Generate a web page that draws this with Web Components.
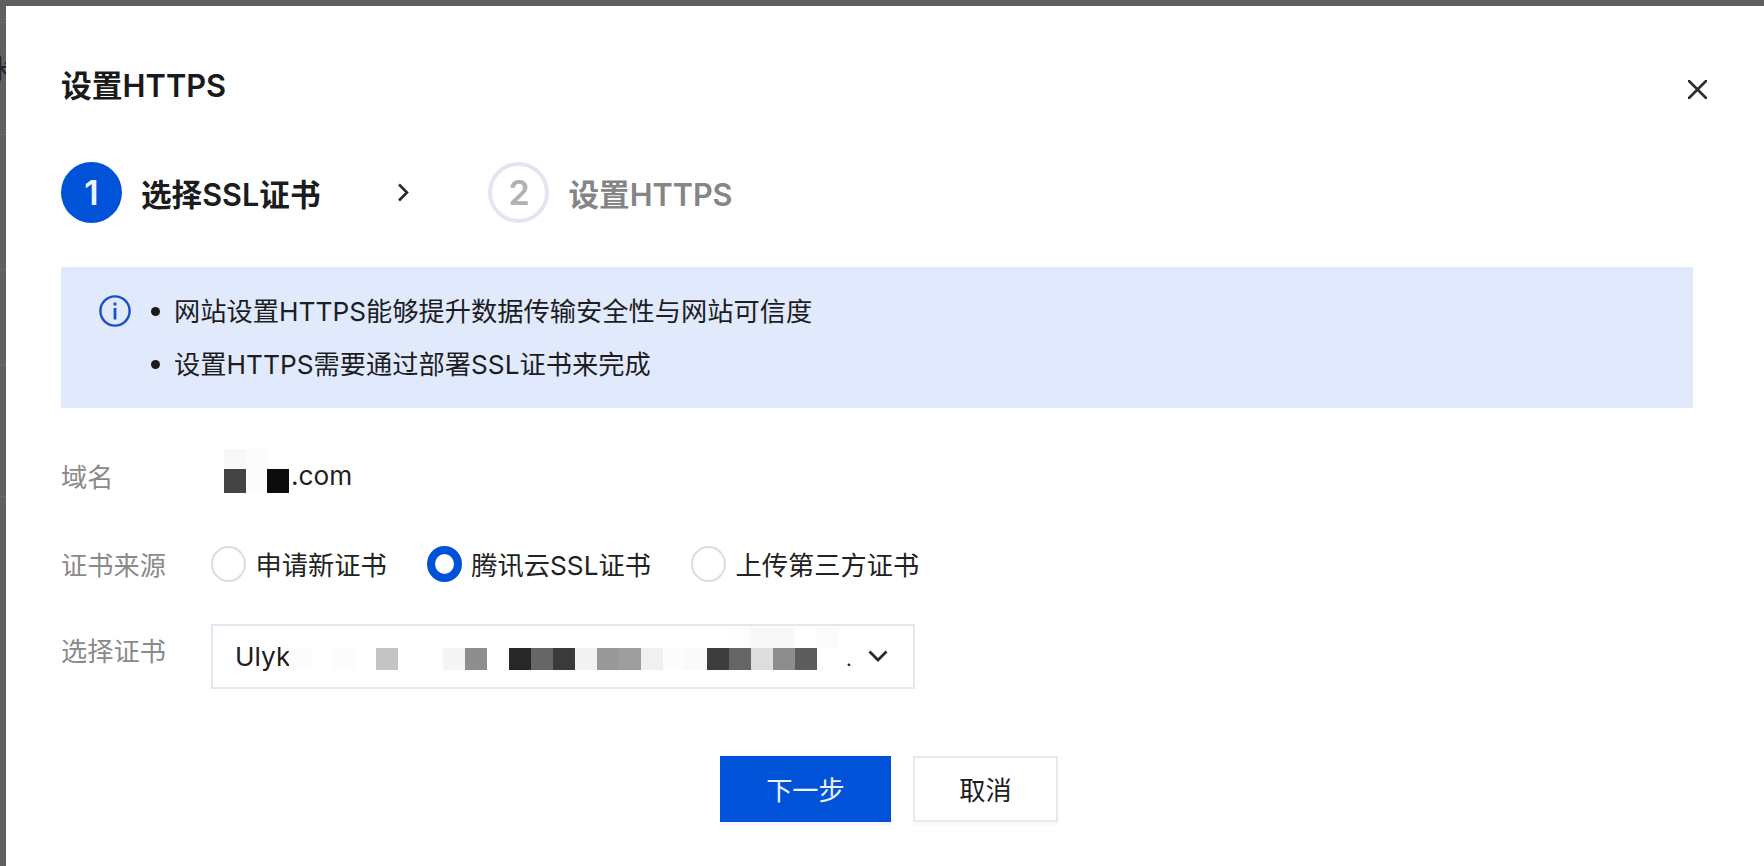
<!DOCTYPE html>
<html lang="zh-CN"><head><meta charset="utf-8"><title>设置HTTPS</title>
<style>
html,body{margin:0;height:100%;overflow:hidden}
body{background:#5f6062;font-family:Inter,"Noto Sans CJK SC",sans-serif;font-size:26.25px;color:#1c1c1c;display:flex;height:866px}
</style></head><body>
<page-behind></page-behind>
<modal-dialog heading="设置HTTPS">
  <step-bar>
    <step-item num="1" active>选择SSL证书</step-item>
    <step-arrow></step-arrow>
    <step-item num="2">设置HTTPS</step-item>
  </step-bar>
  <info-alert>
    <li>网站设置HTTPS能够提升数据传输安全性与网站可信度</li>
    <li>设置HTTPS需要通过部署SSL证书来完成</li>
  </info-alert>
  <form-row label="域名" style="margin-top:42px"><domain-value>.com</domain-value></form-row>
  <form-row label="证书来源" style="margin-top:36px">
    <radio-option>申请新证书</radio-option>
    <radio-option checked>腾讯云SSL证书</radio-option>
    <radio-option>上传第三方证书</radio-option>
  </form-row>
  <form-row label="选择证书" top style="margin-top:34px"><select-box>Ulyk</select-box></form-row>
  <dialog-footer>
    <action-button primary>下一步</action-button>
    <action-button>取消</action-button>
  </dialog-footer>
</modal-dialog>
<script>
function def(name, html){
  customElements.define(name, class extends HTMLElement{
    connectedCallback(){
      if(this.shadowRoot) return;
      const r=this.attachShadow({mode:'open'});
      r.innerHTML=typeof html==='function'?html(this):html;
    }
  });
}
def('page-behind',`<style>
:host{display:block;width:6px;flex:none;overflow:hidden;height:866px}
.l{height:1px;background:#6b6b6d;display:block}
.g{display:block;height:36px;line-height:36px;margin-left:-13px;width:40px;font-size:26px;color:#232325;white-space:nowrap}
</style>
<div style="height:22px"></div><i class="l"></i>
<div style="height:28px"></div><span class="g">米</span>
<div style="height:47px"></div><i class="l"></i>
<div style="height:134px"></div><i class="l"></i>
<div style="height:94px"></div><i class="l"></i>
<div style="height:131px"></div><i class="l"></i>`);
def('modal-dialog',h=>`<style>
:host{display:block;flex:1;margin-top:6px;background:#fff;padding:61px 71px 0 55px;box-sizing:border-box;position:relative;min-width:0}
.t{font-size:30.8px;font-weight:600;line-height:38px;color:#1a1a1a}
.x{position:absolute;right:57px;top:74px;width:19px;height:19px;display:block}
</style><div class="t">${h.getAttribute('heading')}</div>
<svg class="x" viewBox="0 0 19 19"><path d="M1 1L18 18M18 1L1 18" stroke="#2e2e2e" stroke-width="2.6" stroke-linecap="round" fill="none"/></svg>
<slot></slot>`);
def('step-bar',`<style>:host{display:flex;align-items:center;height:61px;margin-top:57px}</style><slot></slot>`);
def('step-item',h=>{const a=h.hasAttribute('active');return `<style>
:host{display:flex;align-items:center;gap:19px}
.c{width:61px;height:61px;border-radius:50%;box-sizing:border-box;display:flex;align-items:center;justify-content:center;font-size:34px;font-weight:600;
${a?'background:#0052d9;color:#eef3fd':'border:4px solid #e3e6ee;color:#b1b1b1'}}
.l{font-size:30.6px;font-weight:600;color:${a?'#1c1c1c':'#858585'}}
</style><span class="c">${h.getAttribute('num')}</span><span class="l"><slot></slot></span>`});
def('step-arrow',`<style>:host{display:block;width:12px;height:19px;margin:0 79px 0 77px}svg{display:block}</style>
<svg width="12" height="19" viewBox="0 0 12 19"><path d="M2 1.5L10 9.5L2 17.5" stroke="#2a2a2a" stroke-width="2.6" fill="none"/></svg>`);
def('info-alert',`<style>
:host{display:flex;margin-top:44px;height:141px;box-sizing:border-box;background:#e1eafd;padding:17.5px 0 0 38px;line-height:53px}
svg{flex:none;width:32px;height:32px;margin-top:10px;margin-right:20px}
ul{margin:0;padding:0;list-style:none}
::slotted(li){list-style:none;display:flex;align-items:center;gap:14px;height:53px;color:#1d1d1f}
::slotted(li)::before{content:"";width:9px;height:9px;border-radius:50%;background:#1a1a1a;flex:none}
</style>
<svg viewBox="0 0 32 32"><circle cx="16" cy="16" r="14.6" fill="none" stroke="#1a4fc6" stroke-width="2.4"/><rect x="14.6" y="7.5" width="2.8" height="3" fill="#1a4fc6"/><rect x="14.6" y="13" width="2.8" height="11.5" fill="#1a4fc6"/></svg>
<ul><slot></slot></ul>`);
def('form-row',h=>`<style>
:host{display:flex;min-height:52px;align-items:${h.hasAttribute('top')?'flex-start':'center'}}
.l{width:150px;flex:none;color:#8a8a8a;${h.hasAttribute('top')?'line-height:56px':''}}
.v{display:flex;align-items:center;gap:40px}
</style><span class="l">${h.getAttribute('label')}</span><div class="v"><slot></slot></div>`);
def('domain-value',`<style>
:host{display:block;position:relative;margin-left:13px;padding-left:67px;line-height:52px;color:#222}
.m{position:absolute;left:0;top:-1px;display:grid;grid-template-columns:22px 21px 22px;grid-template-rows:20px 24px}
.m i{display:block}
</style><div class="m"><i style="background:#f8f8f8"></i><i style="background:#fcfcfc"></i><i></i><i style="background:#444"></i><i style="background:#fcfcfc"></i><i style="background:#0c0c0c"></i></div><slot></slot>`);
def('radio-option',h=>`<style>
:host{display:flex;align-items:center;gap:9.5px;white-space:nowrap;color:#222;font-size:26.25px}
.r{width:35px;height:36px;border-radius:50%;box-sizing:border-box;flex:none;background:#fff;${h.hasAttribute('checked')?'border:8.5px solid #0052d9':'border:2px solid #d9dde8'}}
</style><span class="r"></span><slot></slot>`);
const strip=[['#fcfcfc',76],['#fcfcfc',120],['#c4c4c4',163],['#f5f5f5',230],['#8e8e8e',252],['#272727',296],['#666',318],['#3a3a3a',340],['#f2f2f2',362],['#999',384],['#9e9e9e',406],['#f0f0f0',428],['#fcfcfc',450],['#fafafa',472],['#3d3d3d',494],['#666',516],['#ddd',538],['#8d8d8d',560],['#5c5c5c',582]];
def('select-box',`<style>
:host{display:flex;align-items:center;position:relative;box-sizing:border-box;width:704px;height:65px;border:2px solid #e3e7ef;padding:0 0 0 22px;color:#1c1c1c;line-height:63px}
svg{position:absolute;right:25px;top:24px}
i{position:absolute;display:block}
b{position:absolute;font-weight:400;left:633px;top:2px;font-size:20px}
</style><slot></slot>
${strip.map(([c,x])=>`<i style="left:${x}px;top:22px;width:22px;height:22px;background:${c}"></i>`).join('')}
<i style="left:515px;top:1px;width:22px;height:21px;background:#fdfdfd"></i>
<i style="left:537px;top:1px;width:44px;height:21px;background:#f8f8f8"></i>
<i style="left:603px;top:1px;width:23px;height:21px;background:#fbfbfb"></i>
<b>.</b>
<svg width="20" height="12" viewBox="0 0 20 12"><path d="M1.5 1.5L10 10L18.5 1.5" stroke="#2a2a2a" stroke-width="2.8" fill="none"/></svg>`);
def('dialog-footer',`<style>:host{display:flex;gap:22px;margin-top:67px;padding-left:659px}</style><slot></slot>`);
def('action-button',h=>{const p=h.hasAttribute('primary');return `<style>
:host{display:flex;align-items:center;justify-content:center;height:66px;box-sizing:border-box;width:${p?171:145}px;
${p?'background:#0052d9;color:#eef3fd':'background:#fff;border:2px solid #e6e9f1;color:#1c1c1c'};box-shadow:0 4px 0 ${p?'#f3f6fb':'#f9fafc'}}
</style><slot></slot>`});
</script>
</body></html>
